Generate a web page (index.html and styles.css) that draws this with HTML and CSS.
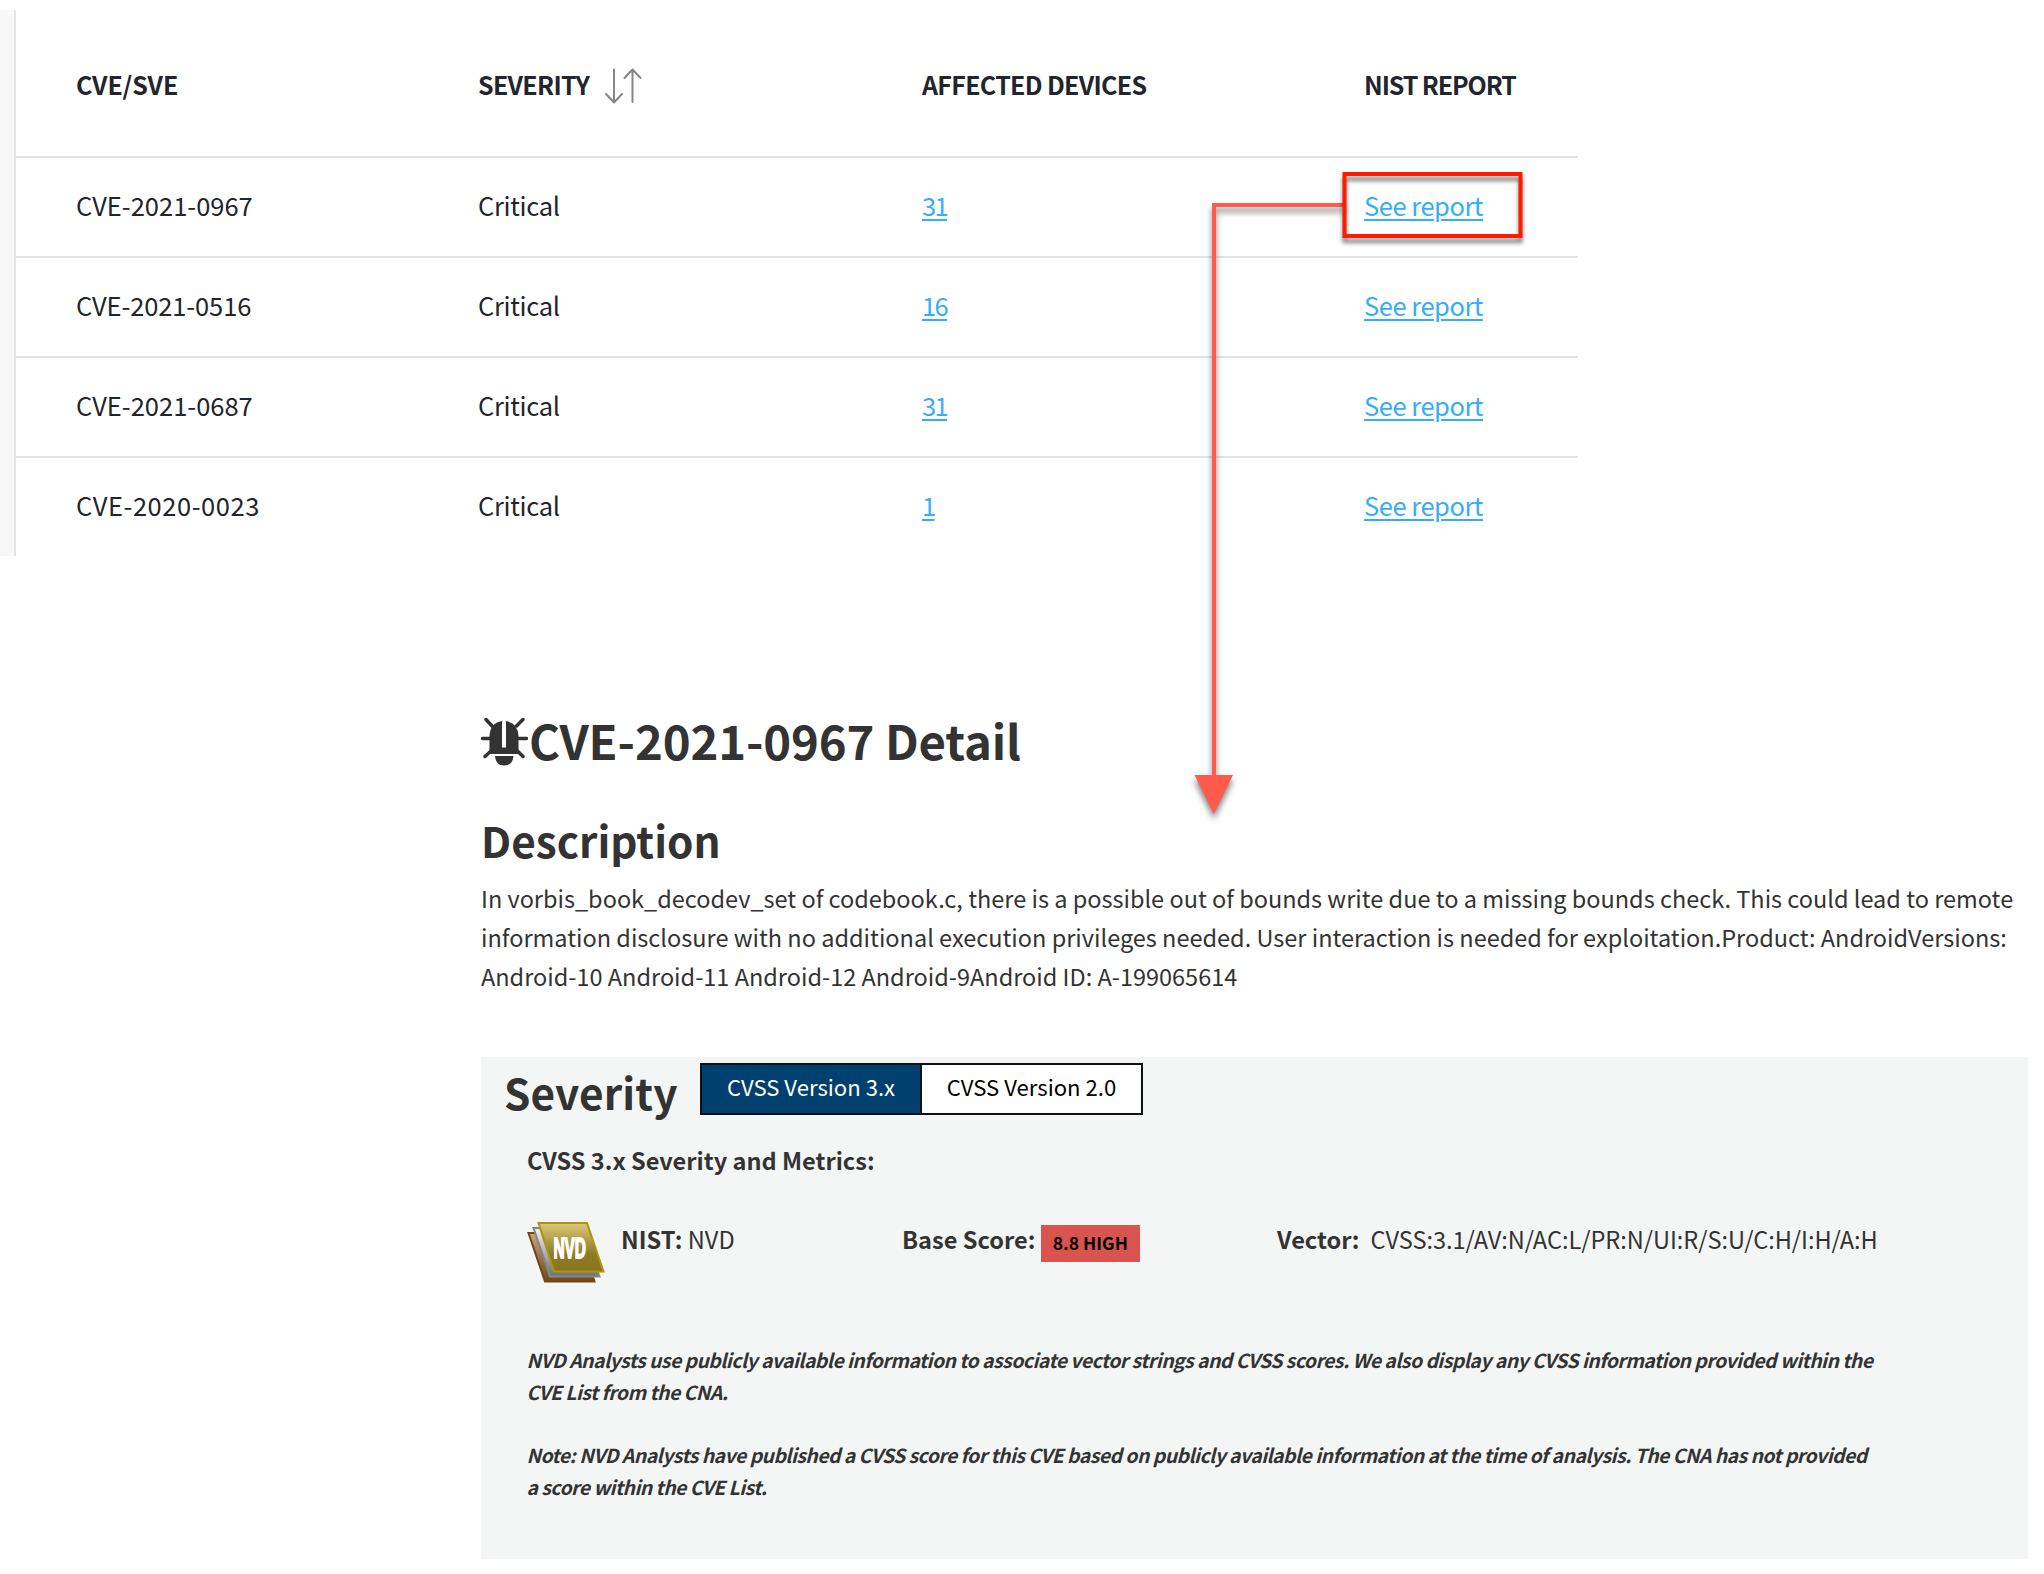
FILE: index.html
```html
<!DOCTYPE html>
<html lang="en">
<head>
<meta charset="utf-8">
<title>CVE report</title>
<link rel="stylesheet" href="styles.css">
</head>
<body>
<section class="cve-table">
  <div class="row head">
    <span class="cell"><b class="th-cve">CVE/SVE</b></span>
    <span class="cell"><b>SEVERITY</b>
      <svg class="sort" width="38" height="36" viewBox="0 0 38 36"><path d="M10 1.500V34M2 26l8 8.500L18 26M28.500 34V2M20.500 10l8-8.500L36.500 10"/></svg></span>
    <span class="cell"><b>AFFECTED DEVICES</b></span>
    <span class="cell"><b class="th-nist">NIST REPORT</b></span>
  </div>
  <div class="row"><span class="cell">CVE-2021-0967</span><span class="cell crit">Critical</span><span class="cell count"><a>31</a></span><span class="cell"><a>See report</a></span></div>
  <div class="row"><span class="cell tight">CVE-2021-0516</span><span class="cell crit">Critical</span><span class="cell count"><a>16</a></span><span class="cell"><a>See report</a></span></div>
  <div class="row"><span class="cell">CVE-2021-0687</span><span class="cell crit">Critical</span><span class="cell count"><a>31</a></span><span class="cell"><a>See report</a></span></div>
  <div class="row"><span class="cell wide">CVE-2020-0023</span><span class="cell crit">Critical</span><span class="cell count"><a>1</a></span><span class="cell"><a>See report</a></span></div>
</section>

<main class="detail">
  <h1><svg class="bug" width="47" height="54" viewBox="0 0 47 54"><path class="fill" d="M8.500 38V20Q9 7 21 5V31.500h4V5Q37 7 37.500 20V38zM14 40H32.500Q31.500 49.500 23.200 49.500T14 40z"/><path class="leg" d="M11 10L5 3.500M35.500 10L42 3.500M9 22.500H1.500M37.500 22.500H45.500M11 34L4 40.500M35.500 34L42 40.500"/></svg><span>CVE-2021-0967 Detail</span></h1>
  <h2>Description</h2>
  <p class="desc">In vorbis_book_decodev_set of codebook.c, there is a possible out of bounds write due to a missing bounds check. This could lead to remote<br>information disclosure with no additional execution privileges needed. User interaction is needed for exploitation.Product: AndroidVersions:<br>Android-10 Android-11 Android-12 Android-9Android ID: A-199065614</p>

  <section class="panel">
    <header class="panel-head">
      <h2>Severity</h2>
      <div class="tabs"><span class="tab on">CVSS Version 3.x</span><span class="tab">CVSS Version 2.0</span></div>
    </header>
    <h3>CVSS 3.x Severity and Metrics:</h3>
    <div class="metrics">
      <svg class="nvd" width="80" height="64" viewBox="0 0 80 64">
        <defs>
          <linearGradient id="gold" x1="0" y1="0" x2="0" y2="1"><stop offset="0" stop-color="#dcc878"/><stop offset=".65" stop-color="#8e7a22"/><stop offset="1" stop-color="#8a7720"/></linearGradient>
          <linearGradient id="silver" x1="0" y1="0" x2="0" y2="1"><stop offset="0" stop-color="#f4f4f4"/><stop offset="1" stop-color="#707070"/></linearGradient>
          <linearGradient id="bronze" x1="0" y1="0" x2="0" y2="1"><stop offset="0" stop-color="#c9a47c"/><stop offset="1" stop-color="#6b4a1a"/></linearGradient>
        </defs>
        <path d="M1.500 12H51L67.500 60.500H18z" fill="url(#bronze)" stroke="#7a4312" stroke-width="2"/>
        <path d="M6.500 7H56L72.500 55.500H23z" fill="url(#silver)" stroke="#858585" stroke-width="2"/>
        <path d="M11.500 2H60L76.500 50.500H27z" fill="url(#gold)" stroke="#ad960f" stroke-width="2"/>
        <text class="nvd-text" transform="translate(26.500 36.500) scale(.57 1)" textLength="57" lengthAdjust="spacingAndGlyphs">NVD</text>
      </svg>
      <div class="m-nist"><b>NIST:</b> NVD</div>
      <div class="m-score"><b>Base Score:</b><span class="badge">8.8 HIGH</span></div>
      <div class="m-vector"><b>Vector:</b><span class="vector">CVSS:3.1/AV:N/AC:L/PR:N/UI:R/S:U/C:H/I:H/A:H</span></div>
    </div>
    <p class="note">NVD Analysts use publicly available information to associate vector strings and CVSS scores. We also display any CVSS information provided within the<br>CVE List from the CNA.</p>
    <p class="note">Note: NVD Analysts have published a CVSS score for this CVE based on publicly available information at the time of analysis. The CNA has not provided<br>a score within the CVE List.</p>
  </section>
</main>

<svg class="callout" width="340" height="670" viewBox="0 0 340 670">
  <g class="shadow"><path class="line" d="M155 45H24V618"/><path class="tip" d="M4.500 615H43L23.800 654z"/></g>
  <rect class="frame" x="154.500" y="14" width="176" height="62"/>
</svg>
</body>
</html>
```
FILE: styles.css
```css
* { box-sizing: border-box; }
body { margin: 0; width: 2044px; height: 1574px; overflow: hidden; position: relative; background: #fff; color: #333; font-family: "Noto Sans CJK SC", "Noto Sans", sans-serif; padding-top: 10px; }

/* vulnerability table */
.cve-table { width: 1564px; margin-left: 14px; border-left: 2px solid #e4e4e4; box-shadow: -14px 0 0 #f8f8f8; color: #22252b; font-size: 25.5px; }
.row { display: grid; grid-template-columns: 402px 444px 442px 1fr; align-items: center; height: 100px; padding: 0 0 4px 60px; border-bottom: 2px solid #e4e4e4; }
.row:last-child { height: 98px; border-bottom: 0; }
.row.head { height: 148px; padding: 2px 0 0 60px; font-size: 25px; letter-spacing: -.7px; }
.row.head .th-cve { letter-spacing: -.15px; }
.row.head .th-nist { letter-spacing: -1.1px; }
.cell { display: flex; align-items: center; white-space: nowrap; line-height: 40px; }
.tight { letter-spacing: -.12px; }
.wide { letter-spacing: .55px; }
.crit { letter-spacing: -.3px; }
.cell a { color: #36adf8; letter-spacing: -.47px; text-decoration: underline; text-decoration-thickness: 2px; text-underline-offset: 3px; }
.count a { letter-spacing: -1.600px; }
.sort { margin: 4px 0 0 15px; fill: none; stroke: #858585; stroke-width: 2; stroke-linecap: round; stroke-linejoin: round; }

/* CVE detail */
.detail { margin-left: 481px; padding-top: 154px; width: 1547px; }
h1, h2, h3, p { margin: 0; white-space: nowrap; }
h1 { display: flex; align-items: center; font-size: 47.300px; line-height: 60px; letter-spacing: -.15px; }
.bug { margin: 6px 1px 0 0; }
.bug .fill { fill: #333; }
.bug .leg { fill: none; stroke: #333; stroke-width: 3.500; stroke-linecap: round; }
h2 { font-size: 42.300px; line-height: 50px; }
.detail > h2 { margin-top: 44.500px; }
.desc { margin-top: 14px; font-size: 23.510px; line-height: 39.400px; }

.panel { margin-top: 60.300px; height: 502px; background: #f4f6f5; padding-top: 6px; }
.panel-head { display: flex; height: 52px; padding-left: 23px; }
.panel-head h2 { width: 196px; padding-top: 4px; letter-spacing: .1px; }
.tabs { display: flex; width: 443px; border: 2px solid #111; background: #fff; color: #000; font-size: 22.100px; line-height: 43px; }
.tab { width: 219px; text-align: center; }
.tab.on { width: 220px; background: #00406f; color: #fff; border-right: 2px solid #111; }
h3 { margin: 29px 0 0 46px; font-size: 23.550px; line-height: 32px; }
.metrics { display: grid; grid-template-columns: 94px 281px 375px 1fr; margin: 44px 0 0 46px; height: 64px; line-height: 38px; font-size: 23.600px; white-space: nowrap; }
.nvd { margin-top: 1px; }
.nvd-text { font: bold 29px "Liberation Sans", sans-serif; fill: #fff; stroke: #fff; stroke-width: 1.800; }
.m-score, .m-vector { display: flex; gap: 5.500px; }
.m-vector { gap: 11px; }
.vector { letter-spacing: -.04px; }
.badge { margin-top: 5px; height: 37px; width: 99px; background: #d9534f; color: #000; font-size: 17.500px; font-weight: bold; line-height: 35px; text-align: center; }
.note { margin: 31.600px 0 0 45.500px; font-size: 19.400px; letter-spacing: -.53px; line-height: 31.600px; font-style: italic; font-weight: bold; }
.metrics + .note { margin-top: 60.300px; }

/* arrow and highlight frame over the page */
.callout { position: absolute; left: 1190px; top: 160px; fill: none; }
.callout .line { stroke: #ff5b4c; stroke-width: 4; }
.callout .tip { fill: #ff5b4c; }
.callout .frame { stroke: #ff1a00; stroke-width: 4; filter: drop-shadow(0 5px 2px rgba(0,0,0,.5)); }
.callout .shadow { filter: drop-shadow(0 5px 3px rgba(0,0,0,.5)); }
```
